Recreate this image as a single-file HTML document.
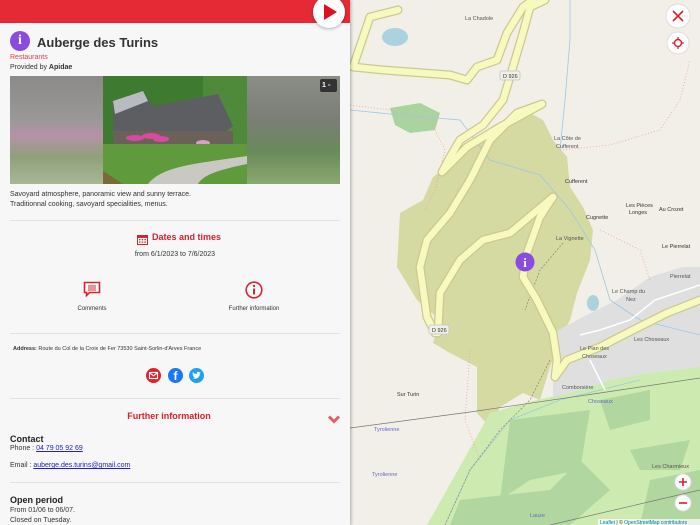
<!DOCTYPE html>
<html><head><meta charset="utf-8"><style>
*{margin:0;padding:0;box-sizing:border-box}
body{width:700px;height:525px;overflow:hidden;font-family:"Liberation Sans",sans-serif;background:#f2efe9;position:relative}
#panel{position:absolute;left:0;top:0;width:350px;height:525px;background:#f7f7f7;overflow:hidden;box-shadow:1px 0 3px rgba(0,0,0,.3);z-index:2}
.hdr{position:absolute;left:0;top:0;width:350px;height:23px;background:#e52a36}
.play{position:absolute;left:313px;top:-4px;width:32px;height:32px;border-radius:50%;background:#fff;box-shadow:0 1px 3px rgba(0,0,0,.3)}
.abs{position:absolute}
.hr{position:absolute;left:10px;width:330px;height:1px;background:#e2e2e2}
a{color:#2222cc}
</style></head><body>
<div id="panel">
<div class="hdr"></div>
<div class="play"><svg width="32" height="32"><polygon points="11,8 24,16 11,24" fill="#e01020"/></svg></div>
<div class="abs" style="left:10px;top:31px;width:20px;height:20px;border-radius:50%;background:#8a4be0;color:#fff;font:bold 14px 'Liberation Serif',serif;text-align:center;line-height:20px">i</div>
<div class="abs" style="left:37px;top:35px;font-size:13px;font-weight:bold;color:#333">Auberge des Turins</div>
<div class="abs" style="left:10px;top:54px;font-size:7px;color:#e0404a">Restaurants</div>
<div class="abs" style="left:10px;top:64px;font-size:7px;color:#333">Provided by <b>Apidae</b></div>
<div class="abs" style="left:10px;top:76px;width:93px;height:108px;background:linear-gradient(180deg,#8a8a88 0%,#9a9896 40%,#b592a8 55%,#8fa07a 75%,#a8b898 100%)"></div>
<svg class="abs" style="left:103px;top:76px" width="144" height="108" viewBox="0 0 144 108">
<rect width="144" height="108" fill="#3e7a30"/>
<rect x="100" y="0" width="44" height="70" fill="#4f8a3a"/>
<polygon points="10,25 40,15 50,30 115,18 130,50 100,75 10,75" fill="#5c5e62"/>
<polygon points="10,25 40,15 45,25 12,38" fill="#b8bcc0"/>
<rect x="10" y="55" width="120" height="20" fill="#6a6258"/>
<ellipse cx="32" cy="62" rx="9" ry="3" fill="#d84aa0"/><ellipse cx="48" cy="60" rx="9" ry="3" fill="#d84aa0"/><ellipse cx="58" cy="63" rx="8" ry="3" fill="#d84aa0"/><ellipse cx="100" cy="67" rx="7" ry="3" fill="#d8a0c0"/>
<rect x="0" y="68" width="144" height="40" fill="#5f9a3c"/>
<path d="M45 108 C60 90 90 88 144 80 L144 88 C110 95 100 100 95 108Z" fill="#c9c8c2"/>
<path d="M0 95 L20 108 L0 108Z" fill="#7a6a3a"/>
</svg>
<div class="abs" style="left:247px;top:76px;width:93px;height:108px;background:linear-gradient(180deg,#8a8e86 0%,#7a7e76 40%,#6a8a5a 70%,#8aa870 100%)"></div>
<div class="abs" style="left:320px;top:79px;width:17px;height:13px;background:#333;border-radius:2px;color:#fff;font-size:7px;font-weight:bold;line-height:13px;padding-left:2px">1 ▫</div>
<div class="abs" style="left:10px;top:190px;font-size:7px;color:#333;line-height:9.5px">Savoyard atmosphere, panoramic view and sunny terrace.<br>Traditionnal cooking, savoyard specialities, menus.</div>
<div class="hr" style="top:220px"></div>
<div class="abs" style="left:137px;top:232px"><svg width="11" height="11"><rect x="0.5" y="1.5" width="10" height="9" fill="#fff" stroke="#e0202a"/><rect x="0.5" y="1.5" width="10" height="2.5" fill="#e0202a"/><g fill="#e0202a"><rect x="2" y="5" width="1.5" height="1.3"/><rect x="4.7" y="5" width="1.5" height="1.3"/><rect x="7.4" y="5" width="1.5" height="1.3"/><rect x="2" y="7.5" width="1.5" height="1.3"/><rect x="4.7" y="7.5" width="1.5" height="1.3"/><rect x="7.4" y="7.5" width="1.5" height="1.3"/></g></svg></div>
<div class="abs" style="left:152px;top:232px;font-size:9px;font-weight:bold;color:#d8202c">Dates and times</div>
<div class="abs" style="left:0;width:350px;top:251px;text-align:center;font-size:7px;color:#333">from 6/1/2023 to 7/6/2023</div>
<div class="abs" style="left:83px;top:281px"><svg width="18" height="16"><path d="M1.5 1.5h15v10h-10l-3 3v-3h-2z" fill="#fff" stroke="#e0202a" stroke-width="1.6"/><path d="M5 5h8M5 7h8M5 9h8" stroke="#e0202a" stroke-width="1"/></svg></div>
<div class="abs" style="left:62px;top:306px;width:60px;text-align:center;font-size:6px;color:#333">Comments</div>
<div class="abs" style="left:245px;top:281px"><svg width="18" height="18"><circle cx="9" cy="9" r="7.8" fill="#fff" stroke="#e0202a" stroke-width="1.6"/><rect x="8" y="7.5" width="2" height="6" fill="#e0202a"/><circle cx="9" cy="5" r="1.2" fill="#e0202a"/></svg></div>
<div class="abs" style="left:214px;top:306px;width:80px;text-align:center;font-size:6px;color:#333">Further information</div>
<div class="hr" style="top:333px"></div>
<div class="abs" style="left:13px;top:346px;font-size:5.5px;color:#333"><b>Address:</b> Route du Col de la Croix de Fer 73530 Saint-Sorlin-d'Arves France</div>
<div class="abs" style="left:146px;top:368px;width:15px;height:15px;border-radius:50%;background:#e0202a"><svg width="15" height="15"><rect x="3.5" y="4.5" width="8" height="6" fill="none" stroke="#fff" stroke-width="1.2"/><path d="M3.5 4.8l4 3 4-3" fill="none" stroke="#fff" stroke-width="1.2"/></svg></div>
<div class="abs" style="left:168px;top:368px;width:15px;height:15px;border-radius:50%;background:#1877f2;color:#fff;font-weight:bold;font-size:12px;text-align:center;line-height:17px">f</div>
<div class="abs" style="left:189px;top:368px;width:15px;height:15px;border-radius:50%;background:#1da1f2"><svg width="15" height="15"><path d="M3.5 10c2 1.2 5 1 6.5-1.5.8-1.3.9-2.6.9-3.3l1-1-1.2.2c-.6-.8-2-.9-2.6 0-.4.5-.4 1.2-.3 1.600-1.6 0-3-.8-4-2-.4 1 0 2 .6 2.4l-.8-.2c0 1 .7 1.6 1.4 1.8h-.8c.3.7 1 1.1 1.7 1.2-.9.7-2 .9-3.4.8z" fill="#fff"/></svg></div>
<div class="hr" style="top:398px"></div>
<div class="abs" style="left:0;width:338px;top:411px;text-align:center;font-size:9px;font-weight:bold;color:#d8202c">Further information</div>
<div class="abs" style="left:328px;top:411px"><svg width="12" height="9"><path d="M1 1.5l5 5 5-5" fill="none" stroke="#e06070" stroke-width="3"/></svg></div>
<div class="abs" style="left:10px;top:434px;font-size:9px;font-weight:bold;color:#222">Contact</div>
<div class="abs" style="left:10px;top:445px;font-size:7px;color:#333">Phone : <a href="#">04 79 05 92 69</a></div>
<div class="abs" style="left:10px;top:462px;font-size:7px;color:#333">Email : <a href="#">auberge.des.turins@gmail.com</a></div>
<div class="hr" style="top:482px"></div>
<div class="abs" style="left:10px;top:495px;font-size:9px;font-weight:bold;color:#222">Open period</div>
<div class="abs" style="left:10px;top:506px;font-size:7px;color:#333;line-height:9.5px">From 01/06 to 06/07.<br>Closed on Tuesday.</div>
</div>

<svg class="abs" style="left:350px;top:0" width="350" height="525" viewBox="0 0 350 525">
<rect width="350" height="525" fill="#f2efe9"/>
<polygon points="130,140 180,113 193,120 203,140 217,157 220,187 233,207 243,230 240,260 227,293 220,320 213,333 200,367 190,400 173,393 150,407 140,427 127,413 127,367 100,353 83,343 90,320 67,300 47,267 50,213 73,200 83,177 110,157" fill="#d5d9a2"/>
<polygon points="203,333 233,317 267,300 300,277 333,267 350,267 350,387 320,383 287,387 253,397 203,400" fill="#e0dfdf"/>
<polygon points="77,525 140,413 187,400 233,390 260,380 300,373 350,367 350,525" fill="#cdebb0"/>
<g fill="#b2d6a0"><polygon points="160,420 240,410 230,470 180,480 150,500"/><polygon points="250,400 300,390 300,420 260,430"/><polygon points="280,450 340,440 330,470 290,470"/><polygon points="110,500 200,490 230,460 260,490 220,525 100,525"/><polygon points="300,480 350,470 350,525 290,525"/></g>
<polygon points="40,108 70,103 90,113 85,130 60,133 45,125" fill="#aad3a0"/>
<ellipse cx="45" cy="37" rx="13" ry="9" fill="#aad3df"/>
<ellipse cx="243" cy="303" rx="6" ry="8" fill="#aad3df"/>
<g fill="none" stroke="#f0a0a0" stroke-width="0.8" stroke-dasharray="1,2"><path d="M0 105 L40 110 L80 120 L95 150 L85 190 L75 210"/><path d="M210 150 L260 145 L310 130 L330 100 L340 60"/><path d="M250 230 L290 250 L300 280"/><path d="M120 350 L115 420 L130 460"/></g>
<g fill="none" stroke="#9cc8e8" stroke-width="0.8"><path d="M0 110 L50 115 L110 120 L140 160 L190 175 L220 210 L245 250 L260 300 L290 320 L350 335"/><path d="M220 0 L220 40 L215 100 L210 150"/><path d="M290 380 L250 390 L210 400 L160 420 L120 470 L95 525"/></g>
<g fill="none" stroke="#a08060" stroke-width="0.7" stroke-dasharray="2,1.5"><path d="M200 360 L180 400 L150 430 L120 470 L95 525"/><path d="M213 243 L190 270 L175 310"/></g>
<g fill="none" stroke="#cfc78e" stroke-width="9" stroke-linecap="round" stroke-linejoin="round">
<path d="M48 10 L20 17 L3 67 L33 70 L100 75 L117 80 L127 67 L147 60 L157 33 L173 7 L183 0"/>
<path d="M195 0 L180 7 L173 33 L160 77 L153 100 L133 125 L110 140 L100 157 L92 172 L117 147 L150 127 L192 104 L167 113 L140 140 L120 180 L100 213 L77 240 L70 267 L77 317 L85 333"/>
<path d="M203 197 L160 233 L133 240 L110 260 L90 293 L88 333"/>
<path d="M203 197 L190 217 L177 253 L173 277 L187 300 L203 333 L207 360 L205 377 L217 360 L250 347 L283 330 L317 313 L350 300"/>
</g>
<g fill="none" stroke="#f7fabf" stroke-width="6.5" stroke-linecap="round" stroke-linejoin="round">
<path d="M48 10 L20 17 L3 67 L33 70 L100 75 L117 80 L127 67 L147 60 L157 33 L173 7 L183 0"/>
<path d="M195 0 L180 7 L173 33 L160 77 L153 100 L133 125 L110 140 L100 157 L92 172 L117 147 L150 127 L192 104 L167 113 L140 140 L120 180 L100 213 L77 240 L70 267 L77 317 L85 333"/>
<path d="M203 197 L160 233 L133 240 L110 260 L90 293 L88 333"/>
<path d="M203 197 L190 217 L177 253 L173 277 L187 300 L203 333 L207 360 L205 377 L217 360 L250 347 L283 330 L317 313 L350 300"/>
</g>
<g fill="none" stroke="#fff" stroke-width="1.5"><path d="M230 335 L250 330 L280 320 L305 300 L350 285"/><path d="M240 360 L255 390"/></g>
<path d="M0 428 L120 412 L250 393 L350 378" stroke="#777" stroke-width="0.7" fill="none"/>
<path d="M200 525 L350 490" stroke="#777" stroke-width="0.7" fill="none"/>
<g font-family="Liberation Sans,sans-serif" font-size="5.5" fill="#555">
<text x="115" y="20">La Chadole</text><text x="204" y="140">La Côte de</text><text x="206" y="148">Cufferent</text><text x="215" y="183" fill="#333">Cufferent</text><text x="236" y="219" fill="#333">Cugnette</text><text x="276" y="207" fill="#333">Les Pièces</text><text x="279" y="214" fill="#333">Longes</text><text x="309" y="211" fill="#333">Au Crozet</text><text x="312" y="248" fill="#333">Le Pierrelat</text><text x="206" y="240">La Vignette</text><text x="320" y="278">Pierrelat</text><text x="262" y="293">Le Champ du</text><text x="276" y="301">Nez</text><text x="284" y="341">Les Choseaux</text><text x="230" y="350">Le Plan des</text><text x="232" y="358">Choseaux</text><text x="212" y="389">Comborsière</text><text x="47" y="396" fill="#333">Sur Turin</text><text x="302" y="468">Les Charmieux</text><text x="24" y="431" fill="#66c">Tyrolienne</text><text x="22" y="476" fill="#66c">Tyrolienne</text><text x="238" y="403" fill="#66c">Choseaux</text><text x="180" y="517" fill="#66c">Lauze</text>
</g>
<rect x="150" y="71" width="20" height="9" rx="2" fill="#f2efe9" stroke="#ccc"/><text x="153" y="78" font-family="Liberation Sans" font-size="5.5" fill="#333">D 926</text>
<rect x="79" y="325" width="20" height="9" rx="2" fill="#f2efe9" stroke="#ccc"/><text x="82" y="332" font-family="Liberation Sans" font-size="5.5" fill="#333">D 926</text>
<circle cx="175" cy="262" r="9.5" fill="#8a4be0"/><text x="175" y="267" text-anchor="middle" font-family="Liberation Serif" font-weight="bold" font-size="13" fill="#fff">i</text>
<rect x="248" y="519" width="102" height="6" fill="rgba(255,255,255,.7)"/><text x="250" y="524" font-family="Liberation Sans" font-size="5" fill="#333"><tspan fill="#0078a8">Leaflet</tspan> | © <tspan fill="#0078a8">OpenStreetMap contributors</tspan></text>
<g><circle cx="328" cy="16" r="12" fill="#fff" stroke="#ddd"/><path d="M323 11l10 10M333 11l-10 10" stroke="#e0202a" stroke-width="1.6"/>
<circle cx="328" cy="43" r="11" fill="#fff" stroke="#ddd"/><circle cx="328" cy="43" r="3.5" fill="none" stroke="#e0202a" stroke-width="1.5"/><path d="M328 37v3M328 46v3M322 43h3M331 43h3" stroke="#e0202a" stroke-width="1.3"/>
<circle cx="333" cy="482" r="8" fill="#fff" stroke="#ddd"/><path d="M329 482h8M333 478v8" stroke="#e0202a" stroke-width="1.6"/>
<circle cx="333" cy="503" r="8" fill="#fff" stroke="#ddd"/><path d="M329 503h8" stroke="#e0202a" stroke-width="1.6"/></g>
</svg>
</body></html>
